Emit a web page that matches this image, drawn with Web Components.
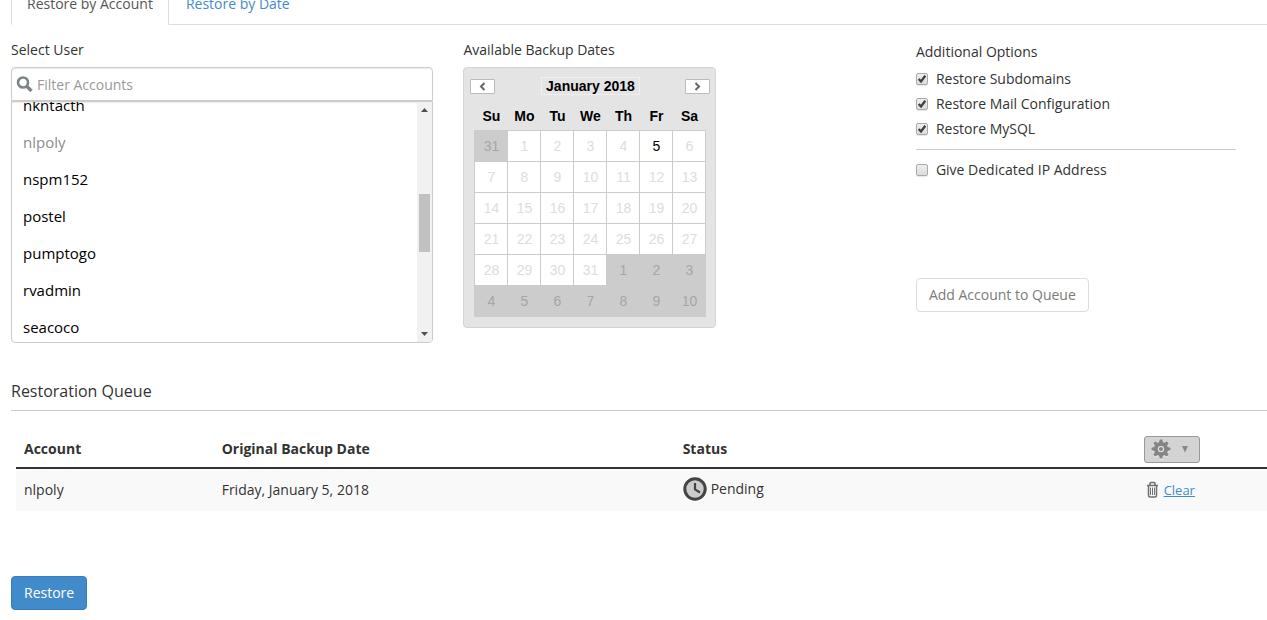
<!DOCTYPE html>
<html lang="en">
<head>
<meta charset="utf-8">
<title>Restore Accounts</title>
<style>
    body {
        margin: 0;
        background: #fff;
        color: #333;
        font: 14px/20px "Open Sans", "Noto Sans", sans-serif;
        overflow-x: hidden;
    }
</style>
</head>
<body>
<restore-page>
    <tab-bar slot="tabs">
        <a-tab active>Restore by Account</a-tab>
        <a-tab>Restore by Date</a-tab>
    </tab-bar>
    <account-picker slot="form" label="Select User" accounts="nkntacth,nlpoly,nspm152,postel,pumptogo,rvadmin,seacoco" queued="nlpoly"></account-picker>
    <backup-calendar slot="form" year="2018" month="1" available="5">Available Backup Dates</backup-calendar>
    <restore-options slot="form">
        <check-option checked label="Restore Subdomains"></check-option>
        <check-option checked label="Restore Mail Configuration"></check-option>
        <check-option checked label="Restore MySQL"></check-option>
        <check-option slot="extra" label="Give Dedicated IP Address"></check-option>
        <push-button slot="action" disabled>Add Account to Queue</push-button>
    </restore-options>
    <restoration-queue>Restoration Queue</restoration-queue>
    <push-button slot="footer" primary>Restore</push-button>
</restore-page>

<script>
function attach(el, html) {
    const template = document.createElement('template');
    template.innerHTML = '<style>*{box-sizing:border-box}[hidden]{display:none}</style>' + html;
    el.attachShadow({mode: 'open'}).appendChild(template.content.cloneNode(true));
    return el.shadowRoot;
}

class RestorePage extends HTMLElement {
    constructor() {
        super();
        attach(this, `
        <style>
            :host { display: block; padding-left: 11px; }
            .form {
                display: grid;
                grid-template-columns: 36fr 36fr 28fr;
                column-gap: 1px;
                padding-top: 15px;
            }
            footer { padding: 65px 0 10px; }
        </style>
        <slot name="tabs"></slot>
        <div class="form"><slot name="form"></slot></div>
        <slot></slot>
        <footer><slot name="footer"></slot></footer>
        `);
    }
}

class TabBar extends HTMLElement {
    constructor() {
        super();
        // short bar, the tabs run out over its top edge
        attach(this, `
        <style>
            :host { display: block; }
            nav {
                display: flex;
                align-items: flex-end;
                gap: 1px;
                height: 25px;
                overflow: hidden;
                box-shadow: inset 0 -1px #ddd;
            }
        </style>
        <nav><slot></slot></nav>
        `);
    }
}

class ATab extends HTMLElement {
    constructor() {
        super();
        attach(this, `
        <style>
            :host { display: block; }
            a {
                display: block;
                padding: 10px 15px;
                border: 1px solid transparent;
                border-radius: 4px 4px 0 0;
                color: #428bca;
                text-decoration: none;
            }
            :host([active]) a {
                color: #555;
                background: #fff;
                border-color: #ddd #ddd #fff;
            }
        </style>
        <a href="#"><slot></slot></a>
        `);
    }
}

class AccountPicker extends HTMLElement {
    constructor() {
        super();
        const queued = this.getAttribute('queued').split(',');
        const options = this.getAttribute('accounts').split(',')
            .map(name => `<option${queued.includes(name) ? ' disabled' : ''}>${name}</option>`).join('');
        this.root = attach(this, `
        <style>
            :host { display: block; padding-right: 29px; }
            .title { display: block; margin-bottom: 7px; }
            .filter {
                display: flex;
                align-items: center;
                gap: 4px;
                height: 34px;
                padding: 0 4px;
                border: 1px solid #ccc;
                border-radius: 4px 4px 0 0;
                box-shadow: inset 0 1px 1px rgba(0, 0, 0, .08);
            }
            input {
                flex: 1;
                min-width: 0;
                padding: 2px 0 0;
                border: 0;
                outline: 0;
                background: none;
                color: #555;
                font: inherit;
            }
            input::placeholder { color: #999; opacity: 1; }
            .list {
                display: flex;
                height: 242px;
                border: 1px solid #ccc;
                border-radius: 0 0 4px 4px;
                overflow: hidden;
                box-shadow: inset 0 1px 1px rgba(0, 0, 0, .08);
            }
            select {
                flex: 1;
                min-width: 0;
                height: 100%;
                padding: 0;
                border: 0;
                outline: 0;
                background: none;
                color: #000;
                font: 15px/21px "Open Sans", "Noto Sans", sans-serif;
                scrollbar-width: none;
            }
            option { padding: 8px 11px; height: 37px; min-height: 37px; line-height: 21px; }
            option:disabled { color: #8c8c8c; }
            .bar {
                display: flex;
                flex-direction: column;
                align-items: center;
                width: 15px;
                background: #f1f1f1;
            }
            .bar svg { flex: none; }
            .track { flex: 1; width: 11px; padding-top: 77px; }
            .thumb { height: 58px; background: #c1c1c1; }
        </style>
        <label class="title" for="accounts">${this.getAttribute('label')}</label>
        <div class="filter">
            <svg width="17" height="17" viewBox="0 0 17 17" fill="none" stroke="#7b8585"><circle cx="7" cy="6.500" r="5" stroke-width="2.600"/><path d="M10.500 10l5 5" stroke-width="3.200"/></svg>
            <input type="text" placeholder="Filter Accounts" aria-label="Filter Accounts">
        </div>
        <div class="list">
            <select id="accounts" size="6">${options}</select>
            <div class="bar" aria-hidden="true">
                <svg width="15" height="15"><path d="M4 10h7l-3.500-4z" fill="#505050"/></svg>
                <div class="track"><div class="thumb"></div></div>
                <svg width="15" height="15"><path d="M4 5h7l-3.500 4z" fill="#505050"/></svg>
            </div>
        </div>
        `);
    }
    connectedCallback() {
        this.root.querySelector('select').scrollTop = 15;
    }
}

class BackupCalendar extends HTMLElement {
    constructor() {
        super();
        this.root = attach(this, `
        <style>
            :host { display: block; }
            .title { margin-bottom: 7px; }
            .calendar {
                width: 253px;
                padding: 9px 5px 10px 6px;
                border: 1px solid #d4d4d4;
                border-radius: 4px;
                background: #e4e4e4;
                color: #000;
                font-family: "Liberation Sans", Arial, sans-serif;
            }
            header {
                display: flex;
                align-items: center;
                justify-content: space-between;
                font-weight: bold;
            }
            header span { padding: 0 4px; border: 1px solid #f0f0f0; line-height: 16px; }
            header button {
                display: flex;
                align-items: center;
                justify-content: center;
                width: 25px;
                height: 15px;
                padding: 0;
                border: 1px solid #bbb;
                border-radius: 1px;
                background: #fff;
            }
            table { margin: 7px 4px 0; border-collapse: collapse; table-layout: fixed; width: 232px; }
            th { height: 28px; padding: 0; }
            td {
                height: 31px;
                padding: 0;
                border: 1px solid #ccc;
                background: #fff;
                color: #ddd;
                text-align: center;
            }
            td.out { background: #ccc; color: #a6a6a6; }
            td.on { color: #000; }
        </style>
        <div class="title"><slot></slot></div>
        <div class="calendar">
            <header>
                <button type="button" aria-label="Previous month"><svg width="7" height="9" fill="none" stroke="#666" stroke-width="2"><path d="M5.500 1L2 4.500 5.500 8"/></svg></button>
                <span></span>
                <button type="button" aria-label="Next month"><svg width="7" height="9" fill="none" stroke="#666" stroke-width="2"><path d="M1.500 1L5 4.500 1.500 8"/></svg></button>
            </header>
            <table>
                <thead><tr><th>Su</th><th>Mo</th><th>Tu</th><th>We</th><th>Th</th><th>Fr</th><th>Sa</th></tr></thead>
                <tbody></tbody>
            </table>
        </div>
        `);
        this.renderMonth();
    }
    renderMonth() {
        const year = Number(this.getAttribute('year'));
        const month = Number(this.getAttribute('month')) - 1;
        const available = this.getAttribute('available').split(',').map(Number);
        const first = new Date(year, month, 1);
        this.root.querySelector('header span').textContent = first.toLocaleString('en-US', {month: 'long'}) + ' ' + year;

        const body = this.root.querySelector('tbody');
        for (let week = 0; week < 6; week++) {
            const row = body.insertRow();
            for (let day = 0; day < 7; day++) {
                const date = new Date(year, month, 1 - first.getDay() + week * 7 + day);
                const cell = row.insertCell();
                cell.textContent = date.getDate();
                if (date.getMonth() !== month) {
                    cell.className = 'out';
                } else if (available.includes(date.getDate())) {
                    cell.className = 'on';
                }
            }
        }
    }
}

class RestoreOptions extends HTMLElement {
    constructor() {
        super();
        attach(this, `
        <style>
            :host { display: block; padding: 2px 31px 0 0; }
            .title { margin-bottom: 7px; }
            .group { display: grid; gap: 5px; }
            hr { margin: 10px 0; border: 0; border-top: 1px solid #ccc; }
            .action { padding-top: 98px; }
        </style>
        <div class="title">Additional Options</div>
        <div class="group"><slot></slot></div>
        <hr>
        <div class="group"><slot name="extra"></slot></div>
        <div class="action"><slot name="action"></slot></div>
        `);
    }
}

class CheckOption extends HTMLElement {
    constructor() {
        super();
        attach(this, `
        <style>
            :host { display: block; }
            label { display: flex; align-items: center; gap: 8px; }
            .box { display: grid; width: 12px; height: 12px; }
            input, svg { grid-area: 1 / 1; }
            input {
                appearance: none;
                width: 12px;
                height: 12px;
                margin: 0;
                border: 1px solid #aaa;
                border-radius: 2px;
                background: linear-gradient(#eee, #dcdcdc);
                box-shadow: 0 1px 1px rgba(0, 0, 0, .1);
            }
            svg { z-index: 1; pointer-events: none; visibility: hidden; }
            input:checked + svg { visibility: visible; }
        </style>
        <label>
            <span class="box">
                <input type="checkbox"${this.hasAttribute('checked') ? ' checked' : ''}>
                <svg width="12" height="12" fill="none" stroke="#404040" stroke-width="2.300"><path d="M2.700 6L5 8.500 9.300 2.800"/></svg>
            </span>
            <span>${this.getAttribute('label')}</span>
        </label>
        `);
    }
}

class PushButton extends HTMLElement {
    constructor() {
        super();
        attach(this, `
        <style>
            :host { display: inline-block; vertical-align: top; }
            button {
                display: block;
                padding: 6px 12px;
                border: 1px solid #ccc;
                border-radius: 4px;
                background: #fff;
                color: #333;
                font: inherit;
                white-space: nowrap;
            }
            button:disabled { border-color: #ddd; color: #7b7b7b; }
            :host([primary]) button { border-color: #357ebd; background: #428bca; color: #fff; }
        </style>
        <button type="button"${this.hasAttribute('disabled') ? ' disabled' : ''}><slot></slot></button>
        `);
    }
}

class RestorationQueue extends HTMLElement {
    constructor() {
        super();
        // eight gear teeth, turned 45deg each
        const teeth = [0, 45, 90, 135, 180, 225, 270, 315]
            .map(a => `<path d="M8.800 0.500h2.400l1.300 4.500h-5z" transform="rotate(${a} 10 10)"/>`).join('');
        attach(this, `
        <style>
            :host { display: block; padding-top: 38px; }
            h4 {
                margin: 0;
                padding-bottom: 9px;
                border-bottom: 1px solid #ccc;
                font-size: 16px;
                font-weight: normal;
                line-height: 20px;
            }
            .wrap { padding: 17px 0 0 5px; }
            table { width: 100%; border-collapse: separate; border-spacing: 0; table-layout: fixed; }
            .account { width: 15.8%; }
            .wide { width: 36.85%; }
            th {
                height: 41px;
                padding: 8px 8px 4px;
                border-bottom: 2px solid #333;
                line-height: 26px;
                text-align: left;
                vertical-align: top;
            }
            td { height: 42px; padding: 8px; background: #f9f9f9; }
            .settings {
                display: flex;
                align-items: center;
                gap: 10px;
                width: 56px;
                height: 27px;
                padding: 0 7px 0 6px;
                border: 1px solid #999;
                border-radius: 3px;
                background: #d3d3d3;
            }
            .status, .clear { display: flex; align-items: center; }
            .status { gap: 4px; padding-bottom: 2px; }
            .clear { gap: 5px; padding-left: 2px; }
            .clear a { color: #428bca; font-size: 13px; }
        </style>
        <h4><slot></slot></h4>
        <div class="wrap">
            <table>
                <colgroup><col class="account"><col class="wide"><col class="wide"><col></colgroup>
                <thead>
                    <tr>
                        <th>Account</th>
                        <th>Original Backup Date</th>
                        <th>Status</th>
                        <th>
                            <button class="settings" type="button" aria-label="Queue settings">
                                <svg width="20" height="21"><g fill="#f0f0f0" transform="translate(0 1)">${teeth}<circle cx="10" cy="10" r="7"/></g><g fill="#858585">${teeth}<circle cx="10" cy="10" r="7"/></g><circle cx="10" cy="10" r="4" fill="#777"/><circle cx="10" cy="10" r="2.700" fill="#888" stroke="#ddd" stroke-width="1.300"/></svg>
                                <svg width="8" height="12"><path d="M1 2h6L4 8.500z" fill="#888"/></svg>
                            </button>
                        </th>
                    </tr>
                </thead>
                <tbody>
                    <tr>
                        <td>nlpoly</td>
                        <td>Friday, January 5, 2018</td>
                        <td>
                            <div class="status">
                                <svg width="24" height="24" fill="none" stroke="#444"><circle cx="12" cy="12" r="10.200" fill="#ccc" stroke-width="3"/><path d="M12 6v6.500l5 3" stroke-width="2.200"/></svg>
                                <span>Pending</span>
                            </div>
                        </td>
                        <td>
                            <div class="clear">
                                <svg width="13" height="18" fill="none" stroke="#707070"><path d="M1 4.500h11M4 4V2.500Q4 1.500 5 1.500h3Q9 1.500 9 2.500V4" stroke-width="1.600"/><path d="M2.500 5v9.500Q2.500 16 4 16h5Q10.500 16 10.500 14.500V5" stroke-width="1.500"/><path d="M4.500 6.500v7.500M6.500 6.500v7.500M8.500 6.500v7.500"/></svg>
                                <a href="#">Clear</a>
                            </div>
                        </td>
                    </tr>
                </tbody>
            </table>
        </div>
        `);
    }
}

customElements.define('restore-page', RestorePage);
customElements.define('tab-bar', TabBar);
customElements.define('a-tab', ATab);
customElements.define('account-picker', AccountPicker);
customElements.define('backup-calendar', BackupCalendar);
customElements.define('restore-options', RestoreOptions);
customElements.define('check-option', CheckOption);
customElements.define('push-button', PushButton);
customElements.define('restoration-queue', RestorationQueue);
</script>
</body>
</html>
